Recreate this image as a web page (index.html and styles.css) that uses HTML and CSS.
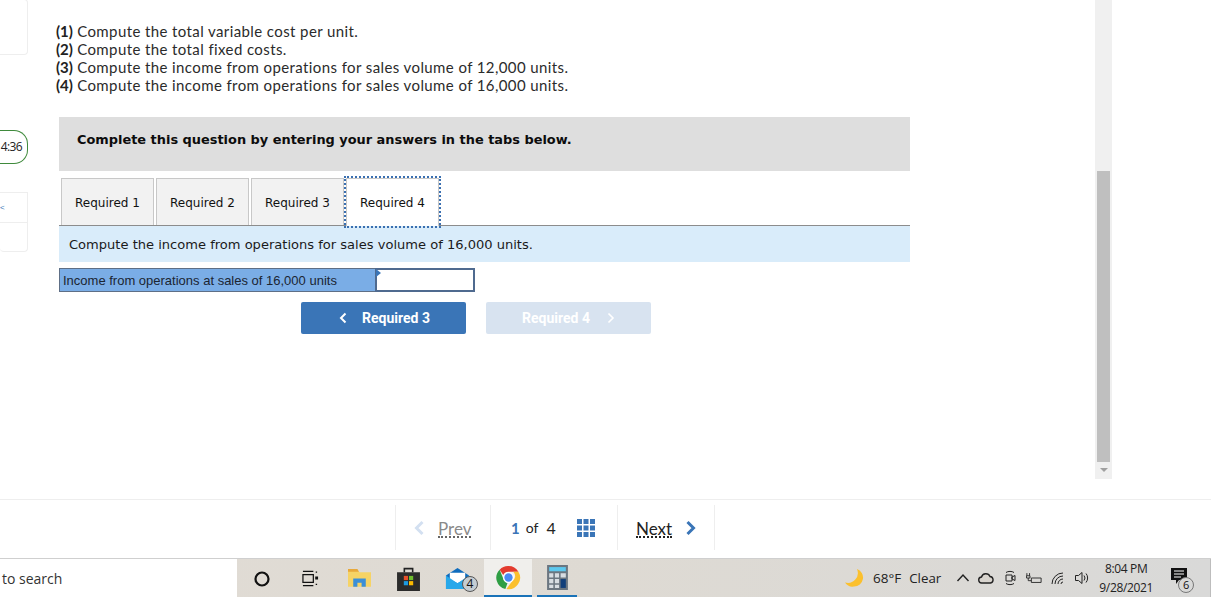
FILE: index.html
```html
<!DOCTYPE html>
<html lang="en">
<head>
<meta charset="utf-8">
<title>Question</title>
<link rel="stylesheet" href="styles.css">
</head>
<body>
<div class="top">
  <aside class="rail">
    <div class="rail-card"></div>
    <div class="timer">4:36</div>
    <div class="rail-card rail-nav"><span class="rail-x">&lt;</span></div>
    <div class="rail-card rail-nav2"></div>
  </aside>
  <main class="main">
    <div class="questions">
      <div><b>(1)</b> Compute the total variable cost per unit.</div>
      <div><b>(2)</b> Compute the total fixed costs.</div>
      <div><b>(3)</b> Compute the income from operations for sales volume of 12,000 units.</div>
      <div><b>(4)</b> Compute the income from operations for sales volume of 16,000 units.</div>
    </div>
    <div class="banner">Complete this question by entering your answers in the tabs below.</div>
    <div class="tabs">
      <div class="tab">Required 1</div>
      <div class="tab">Required 2</div>
      <div class="tab">Required 3</div>
      <div class="tab tab-active">Required 4</div>
    </div>
    <div class="prompt">Compute the income from operations for sales volume of 16,000 units.</div>
    <div class="answer">
      <div class="answer-label">Income from operations at sales of 16,000 units</div>
      <div class="answer-input"><span class="flag"></span></div>
    </div>
    <div class="buttons">
      <div class="btn"><svg class="chev" viewBox="0 0 8 12"><path d="M6.500 1.500 2 6l4.500 4.500" /></svg>Required 3</div>
      <div class="btn btn-off">Required 4<svg class="chev chev-r" viewBox="0 0 8 12"><path d="M1.500 1.500 6 6l-4.500 4.500" /></svg></div>
    </div>
  </main>
  <div class="scrollbar">
    <div class="thumb"></div>
    <div class="arrow"></div>
  </div>
</div>
<nav class="pager">
  <div class="pg pg-prev">
    <svg class="pg-chev" viewBox="0 0 12 16"><path d="M9.500 2 3.500 8l6 6"/></svg>
    <span class="pg-link">Prev</span>
  </div>
  <div class="pg pg-count">
    <span class="pg-now">1</span><span class="pg-of">of</span><span class="pg-total">4</span>
    <svg class="pg-grid" viewBox="0 0 18 18"><path d="M0 0h5v5H0zM6.500 0h5v5h-5zM13 0h5v5h-5zM0 6.500h5v5H0zM6.500 6.500h5v5h-5zM13 6.500h5v5h-5zM0 13h5v5H0zM6.500 13h5v5h-5zM13 13h5v5h-5z"/></svg>
  </div>
  <div class="pg pg-next">
    <span class="pg-link pg-link-on">Next</span>
    <svg class="pg-chev pg-chev-on" viewBox="0 0 12 16"><path d="M2.500 2l6 6-6 6"/></svg>
  </div>
</nav>
<footer class="taskbar">
  <div class="search">to search</div>
  <div class="slot"><svg class="ic" viewBox="0 0 20 20"><circle cx="10" cy="10" r="6.500" fill="none" stroke="#111" stroke-width="2.200"/></svg></div>
  <div class="slot"><svg class="ic-tv" viewBox="1 1 18 18"><path d="M2 2.500h11M2 17.500h11M2 6h11v8H2z" fill="none" stroke="#111" stroke-width="1.300"/><path d="M15.500 2.500H17V4h-1.500zM15 8h3v3h-3zM15.500 15.500H17V17h-1.500z" fill="#111"/></svg></div>
  <div class="slot"><svg class="ic ic-lg" viewBox="0 0 22 20"><path d="M0 2h9l2 2h11v14H0z" fill="#f6d365"/><path d="M0 1h9l1.500 2.500H0z" fill="#e8a93a"/><path d="M5 10h12v8h-4v-4H9v4H5z" fill="#3b8fd9"/></svg></div>
  <div class="slot"><svg class="ic ic-xl" viewBox="0 0 24 24"><path d="M8 6V2.500h8V6" fill="none" stroke="#222" stroke-width="1.500"/><path d="M1 6h22v18H1z" fill="#2b2b2b"/><path d="M7.500 9.500H11.500v4H7.500z" fill="#e8502a"/><path d="M12.500 9.500h4v4h-4z" fill="#6fbe2e"/><path d="M7.500 14.500h4v4h-4z" fill="#1e9be0"/><path d="M12.500 14.500h4v4h-4z" fill="#fbb900"/></svg></div>
  <div class="slot"><svg class="ic ic-xl" viewBox="0 0 26 24"><path d="M1 9 13 1l12 8v14H1z" fill="#0f6cbd"/><path d="M5 6h16v7l-8 4-8-4z" fill="#fff"/><path d="M1 9l12 8 12-8v14H1z" fill="#28a8ea"/></svg><span class="badge">4</span></div>
  <div class="slot slot-chrome"><svg class="ic ic-xl" viewBox="0 0 24 24"><path d="M12 1a11 11 0 0 1 9.500 5.500H12a5.500 5.500 0 0 0-5 3L3.500 4.500A11 11 0 0 1 12 1z" fill="#e33b2e"/><path d="M3.500 4.500 7.800 15a5.500 5.500 0 0 0 3.200 2.400L9 23A11 11 0 0 1 3.500 4.500z" fill="#2f9e44"/><path d="M21.500 6.500A11 11 0 0 1 10 23l5.500-7.500a5.500 5.500 0 0 0 1-9z" fill="#fbc02d"/><circle cx="12" cy="12" r="5.200" fill="#fff"/><circle cx="12" cy="12" r="4" fill="#4a8af4"/></svg></div>
  <div class="slot slot-calc"><svg class="ic ic-xl" viewBox="0 0 20 24"><path d="M0 0h20v24H0z" fill="#6b7680"/><path d="M2 2h16v4H2z" fill="#5cc8ee"/><path d="M2 8h4v4H2zM7.500 8h4v4h-4zM13 8h5v4h-5zM2 13.500h4v4H2zM7.500 13.500h4v4h-4zM2 19h4v3H2zM7.500 19h4v3h-4z" fill="#d7dde2"/><path d="M13 13.500h5V22h-5z" fill="#123f7a"/></svg></div>
  <div class="tray">
    <svg class="moon" viewBox="0 0 20 20"><path d="M13 1a9 9 0 0 1-3 17.500A9 9 0 0 1 1 14.500 10 10 0 0 0 13 1z" fill="#fbc02d"/></svg>
    <span class="temp">68°F</span>
    <span class="sky">Clear</span>
    <svg class="tr tr-caret" viewBox="0 0 14 14"><path d="M1.500 10 7 4l5.500 6"/></svg>
    <svg class="tr tr-cloud" viewBox="0 0 16 14"><path d="M4 12a3 3 0 0 1-.5-6 4.500 4.500 0 0 1 8.500-.5 3.300 3.300 0 0 1 .5 6.500z" fill="#d8d4ce"/></svg>
    <svg class="tr" viewBox="0 0 16 16"><path d="M4 2.500C6 1 10 1 12 2.500M4 13.500c2 1.500 6 1.500 8 0"/><path d="M4 5h6v6H4zM10 7l3-1.500v5L10 9z"/></svg>
    <svg class="tr" viewBox="0 0 18 14"><path d="M6 7h11v5H6zM1 4.500v-3M4 4.500v-3M0.500 4.500h4v2.500h-4zM2.500 7v3H6"/></svg>
    <svg class="tr" viewBox="0 0 16 16"><path d="M2 14a11 11 0 0 1 11-11M5 14a8 8 0 0 1 8-8M8 14a5 5 0 0 1 5-5M11 14a2 2 0 0 1 2-2"/></svg>
    <svg class="tr" viewBox="0 0 16 16"><path d="M1.500 5.500h3l3.500-3v11l-3.500-3h-3zM10 5.500a4 4 0 0 1 0 5M12 3.500a7 7 0 0 1 0 9"/></svg>
    <div class="clock"><span>8:04 PM</span><span>9/28/2021</span></div>
    <div class="notif">
      <svg class="notif-ic" viewBox="0 0 16 16"><path d="M0 0h16v12H8l-3 4v-4H0z" fill="#111"/><path d="M3 3h10M3 6h10M3 9h7" stroke="#fff" stroke-width="1"/></svg>
      <span class="notif-n">6</span>
    </div>
    <div class="desk"></div>
  </div>
</footer>
</body>
</html>
```
FILE: styles.css
```css
* { box-sizing: border-box; }
html, body { margin: 0; height: 100%; }
body {
  width: 1211px;
  height: 597px;
  overflow: hidden;
  background: #fff;
  display: flex;
  flex-direction: column;
  font-family: "Liberation Sans", Arial, sans-serif;
  color: #111;
}
.top { display: flex; height: 499px; flex: none; }
.rail { width: 59px; flex: none; display: flex; flex-direction: column; }
.rail-card {
  width: 28px;
  height: 56px;
  margin-top: -1px;
  border: 1px solid #eee;
  border-left: 0;
  border-radius: 0 4px 4px 0;
}
.timer {
  width: 28px;
  height: 34px;
  margin-top: 75px;
  border: 1px solid #3f8a3c;
  border-left: 0;
  border-radius: 0 14px 14px 0;
  font: 12px/32px "Open Sans", sans-serif;
  letter-spacing: -0.6px;
  text-align: right;
  padding-right: 5px;
  color: #222;
}
.rail-nav { height: 31px; margin-top: 28px; border-radius: 0; font-size: 8px; color: #3a75b7; line-height: 29px; }
.rail-nav2 { height: 29px; margin-top: 0; border-top: 0; border-radius: 0 0 4px 4px; }
.main { width: 851px; flex: none; padding-top: 22px; }
.questions {
  margin-left: -3px;
  font: 15px/18px "Lato", sans-serif;
  letter-spacing: 0.4px;
  color: #2b2b2b;
}
.questions b { color: #222; letter-spacing: 0; }
.banner {
  margin-top: 23px;
  height: 54px;
  background: #dedede;
  padding: 15px 0 0 18px;
  font: bold 12.92px/16px "DejaVu Sans", Verdana, sans-serif;
  color: #0c0c0c;
}
.tabs {
  display: flex;
  gap: 2px;
  margin-top: 7px;
  height: 48px;
  padding-left: 2px;
  border-bottom: 1px solid #8c8c8c;
}
.tab {
  width: 93px;
  height: 47px;
  background: #f2f2f2;
  border: 1px solid #c8c8c8;
  border-bottom: 0;
  font: 12px/48px "DejaVu Sans", Verdana, sans-serif;
  text-align: center;
  color: #111;
}
.tab-active {
  background: #fff;
  height: 48px;
  outline: 2px dotted #3a6fb0;
  outline-offset: 0;
}
.prompt {
  height: 36px;
  background: #d9ecfa;
  padding-left: 10px;
  font: 13.05px/37px "DejaVu Sans", Verdana, sans-serif;
  color: #1a1a1a;
}
.answer { display: flex; margin-top: 6px; height: 24px; width: 416px; }
.answer-label {
  width: 316px;
  background: #7aade6;
  border: 1px solid #5e6f86;
  border-right: 0;
  padding-left: 3px;
  font: 13px/23px "Liberation Sans", Arial, sans-serif;
  color: #1b2532;
}
.answer-input {
  position: relative;
  width: 100px;
  background: #fff;
  border: 2px solid #4f6a8f;
}
.flag {
  position: absolute;
  left: -1px;
  top: -1px;
  border-left: 5px solid #3a75b7;
  border-top: 4px solid transparent;
  border-bottom: 4px solid transparent;
}
.buttons { display: flex; gap: 20px; margin-top: 10px; margin-left: 242px; }
.btn {
  width: 165px;
  height: 32px;
  background: #3a75b7;
  border-radius: 2px;
  display: flex;
  align-items: center;
  justify-content: center;
  gap: 15px;
  padding-left: 2px;
  color: #fff;
  font: bold 14px/32px "Roboto", sans-serif;
}
.btn-off { background: #d8e3f0; padding-left: 0; }
.chev { width: 8px; height: 12px; fill: none; stroke: #fff; stroke-width: 2; }
.chev-r { stroke-width: 1.600; margin-left: 2px; }
.scrollbar {
  width: 17px;
  height: 479px;
  margin-left: 185px;
  background: #f0f0f0;
  display: flex;
  flex-direction: column;
  align-items: center;
  flex: none;
}
.thumb { width: 13px; height: 291px; margin-top: 171px; background: #bfbfbf; }
.arrow {
  margin-top: 6px;
  border-top: 4px solid #a0a0a0;
  border-left: 4px solid transparent;
  border-right: 4px solid transparent;
}
.pager {
  flex: none;
  height: 59px;
  border-top: 1px solid #eee;
  padding: 5px 0 0 395px;
  display: flex;
  align-items: flex-start;
}
.pg {
  height: 45px;
  display: flex;
  align-items: center;
  border-left: 1px solid #eee;
  font: 15px/20px "Lato", sans-serif;
}
.pg-prev { width: 95px; padding-left: 17px; gap: 13px; }
.pg-count { width: 127px; padding-left: 20px; }
.pg-next { width: 98px; padding-left: 18px; gap: 13px; border-right: 1px solid #eee; }
.pg-chev { width: 12px; height: 16px; fill: none; stroke: #d3e0f1; stroke-width: 3; }
.pg-chev-on { stroke: #3a75b7; }
.pg-link {
  color: #8a8a8a;
  font-size: 17px;
  line-height: 15px;
  margin-top: 3px;
  border-bottom: 2px dotted #666;
}
.pg-link-on { color: #222; border-bottom-color: #222; }
.pg-now { color: #3a75b7; font-weight: bold; }
.pg-of { margin-left: 6px; font-size: 14px; color: #222; }
.pg-total { margin-left: 8px; color: #222; font-size: 16px; }
.pg-grid { width: 18px; height: 18px; margin-left: 21px; fill: #3a75b7; }
.taskbar {
  flex: none;
  height: 39px;
  display: flex;
  align-items: stretch;
  background: linear-gradient(90deg, #e1dcd5, #dedad3 50%, #d9d9d8);
  border-top: 1px solid #cfcfcf;
  margin-top: 0;
  font-family: "Open Sans", sans-serif;
}
.search {
  width: 237px;
  padding-left: 2px;
  background: #fff;
  font: 14px/40px "Open Sans", sans-serif;
  color: #333;
}
.slot {
  position: relative;
  width: 49px;
  display: flex;
  align-items: center;
  justify-content: center;
  padding-top: 1px;
}
.ic { width: 20px; height: 20px; }
.ic-tv { width: 17px; height: 17px; }
.ic-lg { width: 23px; height: 23px; }
.ic-xl { width: 25px; height: 25px; }
.badge {
  position: absolute;
  left: 29px;
  top: 17px;
  width: 16px;
  height: 16px;
  border: 1px solid #555;
  border-radius: 50%;
  background: #c4ccd2;
  font: 12px/14px "Open Sans", sans-serif;
  text-align: center;
  color: #111;
}
.slot-chrome {
  width: 48px;
  margin-left: 2px;
  background: #f0efec;
  border-bottom: 2px solid #1a73b8;
}
.slot-calc {
  width: 40px;
  margin-left: 5px;
  border-bottom: 2px solid #1a73b8;
}
.tray { flex: 1; display: flex; align-items: center; padding-left: 267px; min-width: 0; }
.moon { width: 20px; height: 20px; flex: none; }
.temp { margin-left: 9px; font-size: 13.5px; color: #222; }
.sky { margin-left: 8px; font-size: 13.3px; color: #222; width: 33px; }
.tr {
  width: 16px;
  height: 16px;
  margin-left: 8px;
  flex: none;
  fill: none;
  stroke: #222;
  stroke-width: 1;
}
.tr-caret { margin-left: 14px; width: 14px; height: 14px; stroke-width: 1.400; }
.tr-cloud { stroke-width: 1.400; }
.clock {
  width: 60px;
  margin-left: 6px;
  display: flex;
  flex-direction: column;
  align-items: center;
  font-size: 12px;
  line-height: 19px;
  color: #222;
  letter-spacing: -0.35px;
}
.notif { position: relative; width: 24px; height: 26px; margin-left: 15px; }
.notif-ic { width: 16px; height: 16px; position: absolute; left: 0; top: 3px; }
.notif-n {
  position: absolute;
  left: 7px;
  top: 12px;
  width: 16px;
  height: 16px;
  border: 1px solid #777;
  border-radius: 50%;
  background: #d9d9d8;
  font-size: 11px;
  line-height: 14px;
  text-align: center;
  color: #111;
}
.desk { width: 1px; height: 100%; margin-left: auto; background: #bdbdbd; }
```
